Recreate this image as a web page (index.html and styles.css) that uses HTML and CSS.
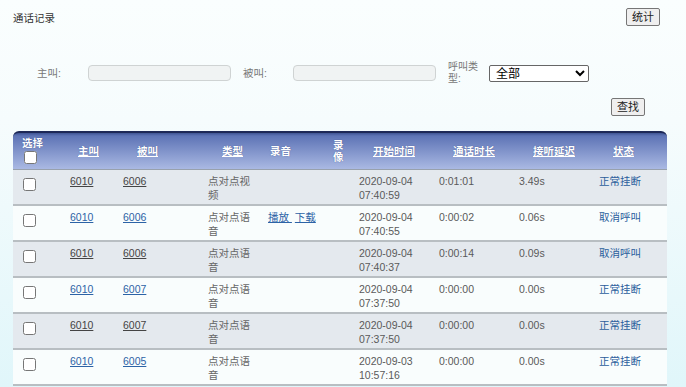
FILE: index.html
```html
<!DOCTYPE html>
<html lang="zh-CN">
<head>
    <meta charset="UTF-8">
    <title>通话记录</title>
    <link rel="stylesheet" href="styles.css">
</head>

<body>
    <div class="page">
        <!-- 标题栏 -->
        <div class="top">
            <h1 class="title">通话记录</h1>
            <button class="btn btn-stat">统计</button>
        </div>

        <!-- 查询条件 -->
        <div class="search">
            <label class="lbl lbl-caller">主叫:</label>
            <input class="txt" type="text">
            <label class="lbl lbl-callee">被叫:</label>
            <input class="txt" type="text">
            <label class="lbl lbl-type">呼叫类型:</label>
            <select class="sel">
                <option>全部</option>
            </select>
        </div>
        <div class="search-btn">
            <button class="btn">查找</button>
        </div>

        <!-- 记录列表 -->
        <table class="list">
            <colgroup>
                <col style="width:52px">
                <col style="width:53px">
                <col style="width:85px">
                <col style="width:60px">
                <col style="width:63px">
                <col style="width:28px">
                <col style="width:80px">
                <col style="width:80px">
                <col style="width:80px">
                <col style="width:73px">
            </colgroup>
            <thead>
                <tr>
                    <th class="h-check">选择<input type="checkbox"></th>
                    <th class="h-caller"><a href="">主叫</a></th>
                    <th><a href="">被叫</a></th>
                    <th><a href="">类型</a></th>
                    <th class="h-plain">录音</th>
                    <th class="h-plain h-video">录像</th>
                    <th><a href="">开始时间</a></th>
                    <th><a href="">通话时长</a></th>
                    <th><a href="">接听延迟</a></th>
                    <th><a href="">状态</a></th>
                </tr>
            </thead>
            <tbody>
                <tr class="odd">
                    <td class="c-check"><input type="checkbox"></td>
                    <td><a href="">6010</a></td>
                    <td><a href="">6006</a></td>
                    <td class="c-type">点对点视频</td>
                    <td></td>
                    <td></td>
                    <td>2020-09-04 07:40:59</td>
                    <td>0:01:01</td>
                    <td>3.49s</td>
                    <td class="c-state">正常挂断</td>
                </tr>
                <tr class="even">
                    <td class="c-check"><input type="checkbox"></td>
                    <td><a href="">6010</a></td>
                    <td><a href="">6006</a></td>
                    <td class="c-type">点对点语音</td>
                    <td><a href="">播放&nbsp;</a> <a href="">下载</a></td>
                    <td></td>
                    <td>2020-09-04 07:40:55</td>
                    <td>0:00:02</td>
                    <td>0.06s</td>
                    <td class="c-state">取消呼叫</td>
                </tr>
                <tr class="odd">
                    <td class="c-check"><input type="checkbox"></td>
                    <td><a href="">6010</a></td>
                    <td><a href="">6006</a></td>
                    <td class="c-type">点对点语音</td>
                    <td></td>
                    <td></td>
                    <td>2020-09-04 07:40:37</td>
                    <td>0:00:14</td>
                    <td>0.09s</td>
                    <td class="c-state">取消呼叫</td>
                </tr>
                <tr class="even">
                    <td class="c-check"><input type="checkbox"></td>
                    <td><a href="">6010</a></td>
                    <td><a href="">6007</a></td>
                    <td class="c-type">点对点语音</td>
                    <td></td>
                    <td></td>
                    <td>2020-09-04 07:37:50</td>
                    <td>0:00:00</td>
                    <td>0.00s</td>
                    <td class="c-state">正常挂断</td>
                </tr>
                <tr class="odd">
                    <td class="c-check"><input type="checkbox"></td>
                    <td><a href="">6010</a></td>
                    <td><a href="">6007</a></td>
                    <td class="c-type">点对点语音</td>
                    <td></td>
                    <td></td>
                    <td>2020-09-04 07:37:50</td>
                    <td>0:00:00</td>
                    <td>0.00s</td>
                    <td class="c-state">正常挂断</td>
                </tr>
                <tr class="even">
                    <td class="c-check"><input type="checkbox"></td>
                    <td><a href="">6010</a></td>
                    <td><a href="">6005</a></td>
                    <td class="c-type">点对点语音</td>
                    <td></td>
                    <td></td>
                    <td>2020-09-03 10:57:16</td>
                    <td>0:00:00</td>
                    <td>0.00s</td>
                    <td class="c-state">正常挂断</td>
                </tr>
            </tbody>
        </table>
    </div>
</body></html>
```

FILE: styles.css
```css
html,
body {
    margin: 0;
    padding: 0;
}

body {
    min-height: 387px;
    background: linear-gradient(to bottom, #fafefe 0, #f6fcfd 120px, #e0f6fa 100%);
    font-family: "Liberation Sans", "Noto Sans CJK SC", sans-serif;
    font-size: 10.5px;
    color: #555;
}

.page {
    padding: 8px 19px 0 13px;
}

/*标题栏*/
.top {
    display: flex;
    justify-content: space-between;
    align-items: flex-start;
}

.title {
    margin: 3px 0 0;
    font-size: 10.5px;
    font-weight: normal;
    line-height: 14px;
    color: #333;
}

.btn {
    height: 18px;
    padding: 0 5px;
    border: 1px solid #767676;
    border-radius: 2px;
    background-color: #efefef;
    font: 11px/16px "Liberation Sans", "Noto Sans CJK SC", sans-serif;
    color: #222;
}

.btn-stat {
    margin-right: 7px;
}

/*查询条件*/
.search {
    display: flex;
    align-items: center;
    margin-top: 35px;
    padding-left: 24px;
}

.lbl {
    color: #777;
    font-size: 10.5px;
    line-height: 12px;
}

.lbl-caller {
    width: 51px;
}

.lbl-callee {
    width: 50px;
    margin-left: 12px;
}

.lbl-type {
    width: 30px;
    margin-left: 12px;
    margin-right: 11px;
    font-size: 10px;
}

.txt {
    box-sizing: border-box;
    width: 143px;
    height: 16px;
    margin: 0;
    border: 1px solid #cfd3d3;
    border-radius: 4px;
    background-color: #f0f3f3;
}

.sel {
    box-sizing: border-box;
    width: 100px;
    height: 17px;
    margin: 0;
    padding: 0 0 0 2px;
    border: 1px solid #666;
    border-radius: 2px;
    background-color: #fff;
    font: 12px "Liberation Sans", "Noto Sans CJK SC", sans-serif;
    color: #000;
}

.search-btn {
    display: flex;
    justify-content: flex-end;
    margin-top: 13px;
    padding-right: 22px;
}

/*记录列表*/
.list {
    width: 654px;
    margin-top: 15px;
    table-layout: fixed;
    border-collapse: separate;
    border-spacing: 0;
}

.list th {
    height: 36px;
    padding: 0 0 0 19px;
    border-top: 2px solid #1d2857;
    border-bottom: 1px solid #98a1ad;
    background: linear-gradient(to bottom, #3f5494 0, #5e74b6 3px, #aab9e3 100%);
    text-align: left;
    vertical-align: middle;
    font-size: 10.5px;
    font-weight: bold;
    line-height: 12px;
    color: #fff;
    text-shadow: 0 0 1px #3a4c86;
}

.list th:first-child {
    border-top-left-radius: 6px;
}

.list th:last-child {
    border-top-right-radius: 6px;
}

.list th a {
    color: #fff;
}

.list th.h-check {
    box-sizing: border-box;
    padding-left: 9px;
    padding-top: 4px;
    vertical-align: top;
}

.list th.h-check input {
    display: block;
    margin: 2px 0 0 2px;
}

.list th.h-caller {
    padding-left: 13px;
}

.list th.h-plain {
    padding-left: 7px;
}

/*录像 两行显示*/
.list th.h-video {
    padding-right: 4px;
}

.list td {
    padding: 4px 5px 2px;
    border-bottom: 2px solid #b8bec2;
    vertical-align: top;
    line-height: 14px;
    color: #5a5a5a;
}

.list td.c-check {
    padding-left: 6px;
}

.list td.c-check input {
    margin: 4px 3px 3px 4px;
}

.list td.c-type {
    color: #666;
}

.list td.c-state {
    color: #2b5e9c;
}

.list tr.odd td {
    background-color: #e4e9ee;
}

.list tr.even td {
    background-color: #f9fdfd;
}

.list tr.odd a {
    color: #444;
}

.list tr.even a {
    color: #2d63a6;
}
```
